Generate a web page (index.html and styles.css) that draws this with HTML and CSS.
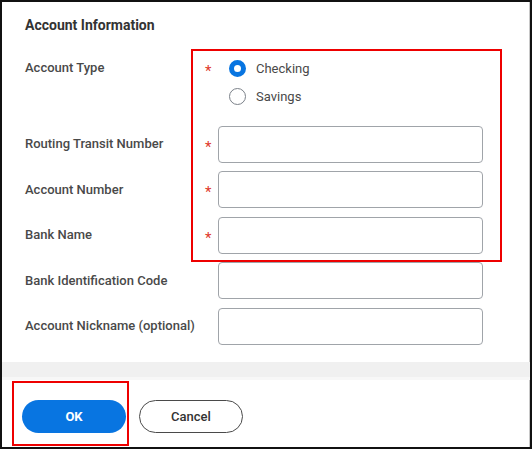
FILE: index.html
```html
<!DOCTYPE html>
<html>
<head>
<meta charset="utf-8">
<link rel="stylesheet" href="styles.css">
</head>
<body>
<div class="dialog">
  <div class="content">
    <h2 class="title">Account Information</h2>
    <div class="form">
      <div class="label label-top">Account Type</div>
      <div class="star star-top">*</div>
      <div class="radios">
        <label class="radio"><span class="dot checked"></span><span>Checking</span></label>
        <label class="radio"><span class="dot"></span><span>Savings</span></label>
      </div>

      <div class="label">Routing Transit Number</div>
      <div class="star">*</div>
      <div class="input"></div>

      <div class="label">Account Number</div>
      <div class="star">*</div>
      <div class="input"></div>

      <div class="label">Bank Name</div>
      <div class="star">*</div>
      <div class="input"></div>

      <div class="label">Bank Identification Code</div>
      <div class="star"></div>
      <div class="input"></div>

      <div class="label">Account Nickname (optional)</div>
      <div class="star"></div>
      <div class="input"></div>
    </div>
  </div>
  <div class="band"></div>
  <div class="footer">
    <button class="btn btn-ok">OK</button>
    <button class="btn btn-cancel">Cancel</button>
  </div>
  <div class="mark mark-fields"></div>
  <div class="mark mark-ok"></div>
</div>
</body>
</html>
```

FILE: styles.css
```css
* { box-sizing: border-box; }
html, body { margin: 0; padding: 0; background: #fff; }
body { font-family: Roboto, "Liberation Sans", Arial, sans-serif; color: #494949; }

.dialog {
  position: relative;
  width: 532px;
  height: 449px;
  border: 2px solid #111;
  display: flex;
  flex-direction: column;
  box-shadow: inset -1px 0 0 #c8c8c8;
}

.content {
  padding: 13px 0 0 23px;
  height: 360px;
}

.title {
  margin: 0 0 20px;
  font-size: 14px;
  line-height: 20px;
  font-weight: 700;
  color: #333;
}

.form {
  display: grid;
  grid-template-columns: 180px 13px 265px;
  grid-template-rows: 62px 37px 37px 37px 37px 37px;
  row-gap: 8.5px;
}

.label {
  font-size: 13px;
  font-weight: 500;
  color: #494949;
  display: flex;
  align-items: center;
  padding-bottom: 1px;
}
.label-top {
  align-items: flex-start;
  line-height: 28px;
  padding-bottom: 0;
  margin-top: -1px;
}

.star {
  color: #e0392b;
  font-size: 15px;
  line-height: 37px;
  padding-top: 3px;
}
.star-top {
  line-height: 28px;
  padding-top: 2px;
}

.radios {
  display: flex;
  flex-direction: column;
}
.radio {
  display: flex;
  align-items: center;
  height: 28px;
  font-size: 13px;
  color: #494949;
  padding-left: 10.5px;
  margin-top: -0.5px;
}
.dot {
  width: 17px;
  height: 17px;
  border-radius: 50%;
  border: 1px solid #7b8189;
  background: #fff;
  margin-right: 10.5px;
  flex: none;
}
.dot.checked {
  border: 5px solid #0875e1;
}

.input {
  height: 37px;
  border: 1px solid #a0a4a9;
  border-radius: 4px;
  background: #fff;
}

.band {
  height: 18px;
  background: #f0f0f0;
  border-bottom: 3px solid #f7f7f7;
}

.footer {
  display: flex;
  gap: 13px;
  padding: 20px 0 0 20px;
}
.btn {
  width: 104px;
  height: 33px;
  border-radius: 17px;
  font-family: Roboto, "Liberation Sans", Arial, sans-serif;
  font-size: 13px;
  padding: 0;
  cursor: pointer;
}
.btn-ok {
  background: #0875e1;
  border: none;
  color: #fff;
  font-weight: 700;
}
.btn-cancel {
  background: #fff;
  border: 1px solid #4a4a4a;
  color: #333;
  font-weight: 500;
}

.mark {
  position: absolute;
  border: 2px solid #ee0000;
  pointer-events: none;
}
.mark-fields {
  left: 189px;
  top: 47px;
  width: 311px;
  height: 213px;
}
.mark-ok {
  left: 10px;
  top: 379px;
  width: 117px;
  height: 65px;
}
```
